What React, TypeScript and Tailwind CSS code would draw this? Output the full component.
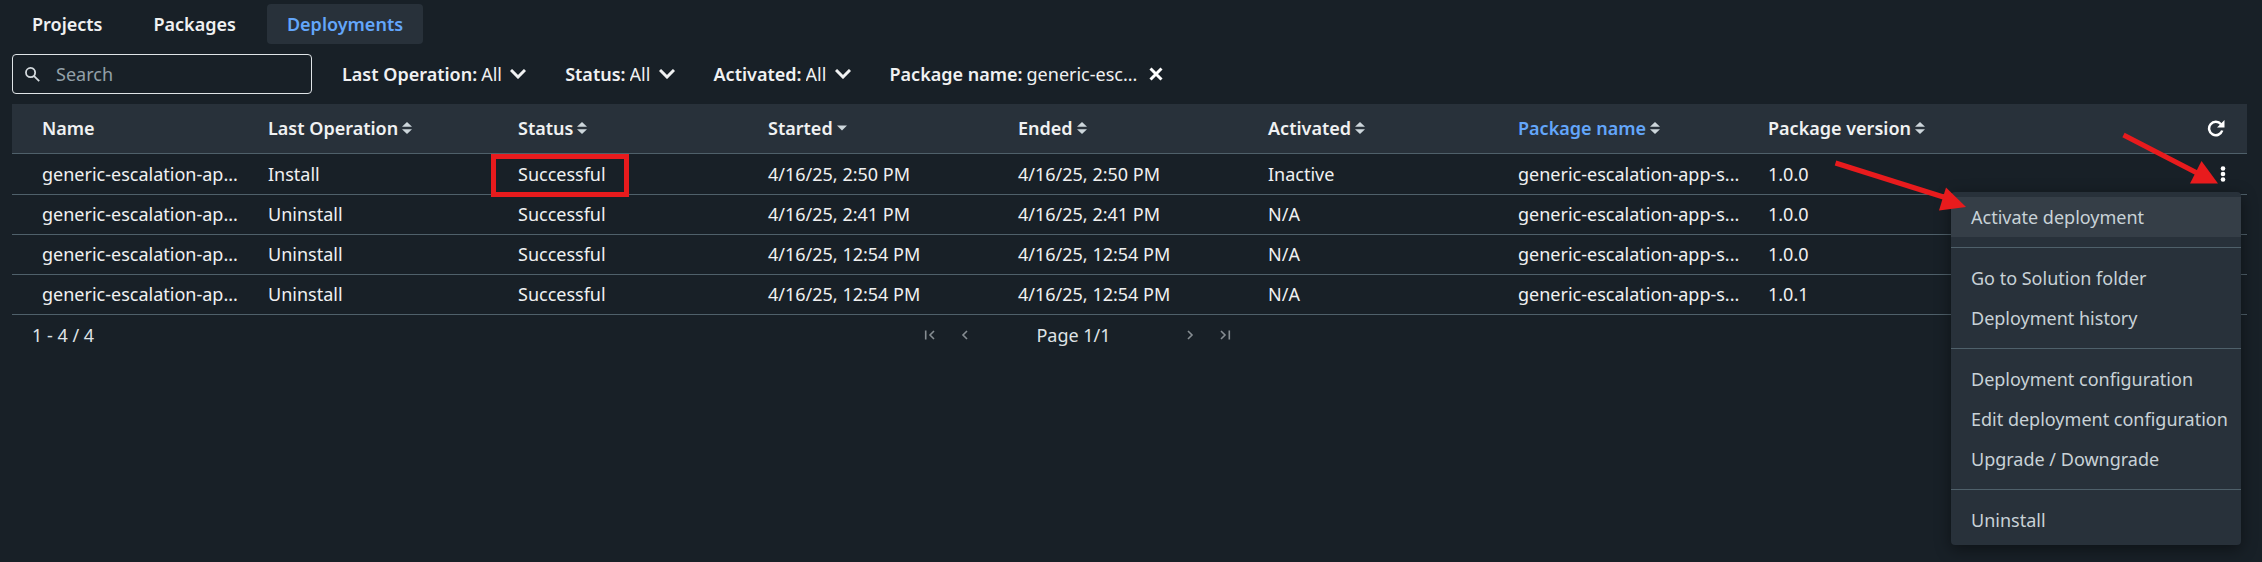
import React from 'react';

type Deployment = {
  operation: string;
  started: string;
  ended: string;
  activated: string;
  version: string;
};

const deployments: Deployment[] = [
  { operation: 'Install', started: '4/16/25, 2:50 PM', ended: '4/16/25, 2:50 PM', activated: 'Inactive', version: '1.0.0' },
  { operation: 'Uninstall', started: '4/16/25, 2:41 PM', ended: '4/16/25, 2:41 PM', activated: 'N/A', version: '1.0.0' },
  { operation: 'Uninstall', started: '4/16/25, 12:54 PM', ended: '4/16/25, 12:54 PM', activated: 'N/A', version: '1.0.0' },
  { operation: 'Uninstall', started: '4/16/25, 12:54 PM', ended: '4/16/25, 12:54 PM', activated: 'N/A', version: '1.0.1' },
];

const menuGroups: string[][] = [
  ['Activate deployment'],
  ['Go to Solution folder', 'Deployment history'],
  ['Deployment configuration', 'Edit deployment configuration', 'Upgrade / Downgrade'],
  ['Uninstall'],
];

function Tab({ label, active }: { label: string; active?: boolean }) {
  return (
    <button
      type="button"
      role="tab"
      aria-selected={!!active}
      className={
        active
          ? 'h-10 rounded bg-[#28313a] px-5 font-semibold text-[#63a6fa]'
          : 'h-10 rounded px-5 font-semibold'
      }
    >
      {label}
    </button>
  );
}

function Filter({ id, label }: { id: string; label: string }) {
  return (
    <div className="flex items-center gap-1">
      <label htmlFor={id} className="font-semibold">{label}:</label>
      <div className="relative flex items-center">
        <select id={id} className="appearance-none bg-transparent pr-6 outline-none">
          <option>All</option>
        </select>
        <svg className="pointer-events-none absolute right-0" width="16" height="10" viewBox="0 0 16 10" fill="none" stroke="currentColor" strokeWidth="3">
          <path d="M1 1 8 8 15 1" />
        </svg>
      </div>
    </div>
  );
}

function SortIcon({ descending }: { descending?: boolean }) {
  return (
    <svg width="10" height="12" viewBox="0 0 10 12" fill="#cdd6db">
      {descending ? (
        <path d="M0 3.500h10L5 8.500z" />
      ) : (
        <>
          <path d="M0 4.700h10L5 0z" />
          <path d="M0 7.300h10L5 12z" />
        </>
      )}
    </svg>
  );
}

function HeaderCell({ label, sort, highlighted }: { label: string; sort?: 'both' | 'desc'; highlighted?: boolean }) {
  return (
    <th scope="col" className="p-0 text-left font-semibold">
      {sort ? (
        <button type="button" className="flex items-center gap-1">
          <span className={highlighted ? 'text-[#63a6fa]' : ''}>{label}</span>
          <SortIcon descending={sort === 'desc'} />
        </button>
      ) : (
        label
      )}
    </th>
  );
}

function ActionMenu() {
  return (
    <div role="menu" className="absolute top-[38px] right-[6px] z-10 w-[290px] rounded bg-[#28313a] py-[5px] whitespace-nowrap text-[#c8d2d7] shadow-[0_4px_16px_rgba(0,0,0,0.45)]">
      {menuGroups.map((group, g) => (
        <div key={group[0]} className={g > 0 ? 'mt-[10px] border-t border-[#4f606a] pt-[10px]' : ''}>
          {group.map((item) => (
            <button
              key={item}
              type="button"
              role="menuitem"
              className={
                g === 0
                  ? 'block h-10 w-full bg-[#353e47] px-5 text-left'
                  : 'block h-10 w-full px-5 text-left'
              }
            >
              {item}
            </button>
          ))}
        </div>
      ))}
    </div>
  );
}

function Arrows() {
  return (
    <svg className="pointer-events-none absolute top-[-24px] right-[20px] z-20" width="400" height="84" viewBox="0 0 400 84" fill="#e81b1d" stroke="#e81b1d">
      <path d="M8.500 33 118 67.500" strokeWidth="5" />
      <path d="M119 57.500 139 77 112 80.500z" stroke="none" />
      <path d="M296.500 5 372 44" strokeWidth="5" />
      <path d="M374.500 31 391 53.500 363 53.500z" stroke="none" />
    </svg>
  );
}

function PagerButton({ label, path }: { label: string; path: string }) {
  return (
    <button type="button" aria-label={label} disabled className="flex size-5 items-center justify-center">
      <svg width="12" height="10" viewBox="0 0 12 10" fill="none" stroke="#868d92" strokeWidth="1.6">
        <path d={path} />
      </svg>
    </button>
  );
}

export default function App() {
  return (
    <main className="min-h-screen bg-[#182027] pt-1 pr-[15px] pl-3 font-['Noto_Sans',sans-serif] text-[18px] leading-6 text-[#f0f1f2]">
      <div role="tablist" className="flex gap-[11px]">
        <Tab label="Projects" />
        <Tab label="Packages" />
        <Tab label="Deployments" active />
      </div>

      <div className="mt-[10px] flex h-10 items-center">
        <div className="mr-[30px] flex h-10 w-[300px] items-center gap-4 rounded border border-[#dfe4e7] px-3">
          <svg width="17" height="17" viewBox="0 0 17 17" fill="none" stroke="#d5dbdf" strokeWidth="2">
            <circle cx="6.300" cy="6.300" r="5.200" />
            <path d="m10 10 6 6" />
          </svg>
          <input aria-label="Search" placeholder="Search" className="w-full min-w-0 bg-transparent outline-none placeholder:text-[#93a0a9]" />
        </div>
        <div className="flex items-center gap-[39px]">
          <Filter id="filter-operation" label="Last Operation" />
          <Filter id="filter-status" label="Status" />
          <Filter id="filter-activated" label="Activated" />
          <div className="flex items-center">
            <span className="mr-1 font-semibold">Package name:</span>
            <span>generic-esc...</span>
            <button type="button" aria-label="Clear package name filter" className="ml-3">
              <svg width="14" height="14" viewBox="0 0 14 14" fill="none" stroke="#ffffff" strokeWidth="3">
                <path d="M1.500 1.500 12.500 12.500M12.500 1.500 1.500 12.500" />
              </svg>
            </button>
          </div>
        </div>
      </div>

      <table className="mt-[10px] w-full table-fixed border-collapse">
        <colgroup>
          <col className="w-[30px]" />
          <col className="w-[226px]" />
          <col className="w-[250px]" />
          <col className="w-[250px]" />
          <col className="w-[250px]" />
          <col className="w-[250px]" />
          <col className="w-[250px]" />
          <col className="w-[250px]" />
          <col />
          <col className="w-[60px]" />
        </colgroup>
        <thead>
          <tr className="h-[49px] border-b border-[#4f606a] bg-[#28313a]">
            <td />
            <HeaderCell label="Name" />
            <HeaderCell label="Last Operation" sort="both" />
            <HeaderCell label="Status" sort="both" />
            <HeaderCell label="Started" sort="desc" />
            <HeaderCell label="Ended" sort="both" />
            <HeaderCell label="Activated" sort="both" />
            <HeaderCell label="Package name" sort="both" highlighted />
            <HeaderCell label="Package version" sort="both" />
            <td className="p-0 pr-[22px]">
              <button type="button" aria-label="Refresh" className="ml-auto block">
                <svg width="18" height="17" viewBox="0 0 18 17" fill="none" stroke="#ffffff" strokeWidth="2.500">
                  <path d="M14 4.300A6.700 6.700 0 1 0 15.200 10.500" />
                  <path d="M17.500 0v7.500H10z" fill="#ffffff" stroke="none" />
                </svg>
              </button>
            </td>
          </tr>
        </thead>
        <tbody>
          {deployments.map((row, i) => (
            <tr key={i} className={i === 0 ? 'h-[41px] border-b border-[#4f606a]' : 'h-10 border-b border-[#4f606a]'}>
              <td />
              <td className="p-0">generic-escalation-ap...</td>
              <td className="p-0">{row.operation}</td>
              <td className="relative p-0">
                Successful
                {i === 0 && (
                  <span className="pointer-events-none absolute top-0 left-[-27px] h-[43px] w-[138px] border-[5px] border-[#e81b1d]" />
                )}
              </td>
              <td className="p-0">{row.started}</td>
              <td className="p-0">{row.ended}</td>
              <td className="p-0">{row.activated}</td>
              <td className="p-0">generic-escalation-app-s...</td>
              <td className="p-0">{row.version}</td>
              <td className="relative p-0 pr-[21px]">
                {i === 0 && (
                  <>
                    <button type="button" aria-label="Deployment actions" aria-haspopup="menu" aria-expanded="true" className="ml-auto block">
                      <svg width="6" height="16" viewBox="0 0 6 16" fill="#ffffff">
                        <circle cx="3" cy="2.500" r="2.300" />
                        <circle cx="3" cy="8" r="2.300" />
                        <circle cx="3" cy="13.500" r="2.300" />
                      </svg>
                    </button>
                    <ActionMenu />
                    <Arrows />
                  </>
                )}
              </td>
            </tr>
          ))}
        </tbody>
      </table>

      <div className="flex h-10 items-center pl-5 text-[#dfe3e6]">
        <span className="w-[888px]">1 - 4 / 4</span>
        <nav aria-label="Pagination" className="flex items-center">
          <div className="flex gap-[15px]">
            <PagerButton label="First page" path="M1.700 0.500v9M10 1 6 5l4 4" />
            <PagerButton label="Previous page" path="M8 1 4 5l4 4" />
          </div>
          <span className="w-[205px] pr-2 text-center">Page 1/1</span>
          <div className="flex gap-[15px]">
            <PagerButton label="Next page" path="M4 1l4 4-4 4" />
            <PagerButton label="Last page" path="M2 1l4 4-4 4M10.300 0.500v9" />
          </div>
        </nav>
      </div>
    </main>
  );
}
